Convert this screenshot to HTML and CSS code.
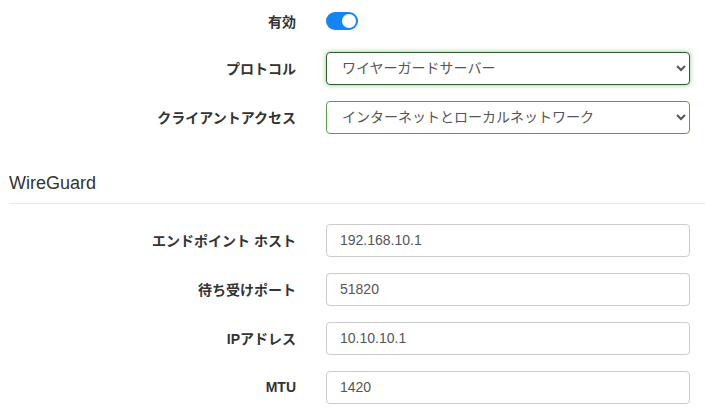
FILE: index.html
```html
<!DOCTYPE html>
<html lang="ja">
<head>
<meta charset="utf-8">
<link rel="stylesheet" href="styles.css">
</head>
<body>
<div class="page">
  <div class="row row-toggle">
    <label class="lbl">有効</label>
    <div class="ctl">
      <span class="switch"><span class="knob"></span></span>
    </div>
  </div>
  <div class="row">
    <label class="lbl">プロトコル</label>
    <div class="ctl">
      <select class="sel sel-focus">
        <option>ワイヤーガードサーバー</option>
      </select>
    </div>
  </div>
  <div class="row">
    <label class="lbl">クライアントアクセス</label>
    <div class="ctl">
      <select class="sel sel-ok">
        <option>インターネットとローカルネットワーク</option>
      </select>
    </div>
  </div>

  <div class="legend">WireGuard</div>

  <div class="row">
    <label class="lbl">エンドポイント ホスト</label>
    <div class="ctl"><input class="inp" type="text" value="192.168.10.1"></div>
  </div>
  <div class="row">
    <label class="lbl">待ち受けポート</label>
    <div class="ctl"><input class="inp" type="text" value="51820"></div>
  </div>
  <div class="row">
    <label class="lbl">IPアドレス</label>
    <div class="ctl"><input class="inp" type="text" value="10.10.10.1"></div>
  </div>
  <div class="row">
    <label class="lbl">MTU</label>
    <div class="ctl"><input class="inp" type="text" value="1420"></div>
  </div>
</div>
</body>
</html>
```

FILE: styles.css
```css
html, body {
  margin: 0;
  padding: 0;
  background: #fff;
}
body {
  font-family: "Liberation Sans", "Noto Sans CJK JP", sans-serif;
  font-size: 13px;
  color: #333;
}
.page {
  padding: 4px 15px 0 8px;
}
.row {
  display: grid;
  grid-template-columns: 288px 364px;
  column-gap: 30px;
  align-items: center;
  height: 34px;
  margin-bottom: 15px;
}
.row-toggle {
  margin-bottom: 13px;
}
.lbl {
  text-align: right;
  font-weight: bold;
  font-size: 14px;
  color: #333;
}
.ctl {
  display: flex;
  align-items: center;
}
.switch {
  display: block;
  width: 32px;
  height: 18px;
  border-radius: 9px;
  background: #1584f7;
  position: relative;
}
.knob {
  position: absolute;
  right: 2px;
  top: 2px;
  width: 14px;
  height: 14px;
  border-radius: 50%;
  background: #fff;
}
.sel, .inp {
  box-sizing: border-box;
  width: 364px;
  height: 33px;
  border: 1px solid #ccc;
  border-radius: 4px;
  background: #fff;
  font-family: "Liberation Sans", "Noto Sans CJK JP", sans-serif;
  font-size: 14px;
  color: #555;
  margin: 0;
}
.sel {
  padding: 0 8px 0 11px;
}
.inp {
  padding: 0 13px;
}
.sel-focus {
  border-color: #2b5e2c;
  box-shadow: 0 0 5px rgba(103, 177, 104, 0.7);
  outline: none;
}
.sel-ok {
  border-color: #5c9e45;
}
.legend {
  margin: 36px -15px 19px 1px;
  padding-bottom: 6px;
  font-size: 18px;
  line-height: 27px;
  color: #333;
  border-bottom: 1px solid #e8e8e8;
}
```
